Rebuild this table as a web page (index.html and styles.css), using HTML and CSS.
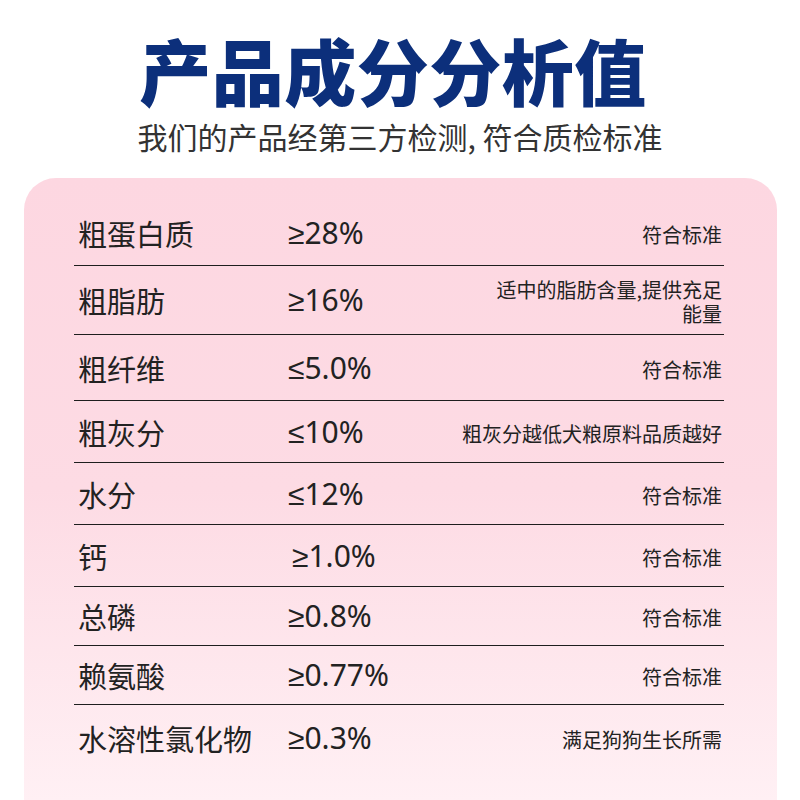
FILE: index.html
```html
<!DOCTYPE html>
<html lang="zh-CN">
<head>
<meta charset="utf-8">
<title>产品成分分析值</title>
<link rel="stylesheet" href="styles.css">
</head>
<body>
<header class="header">
  <h1 class="title">产品成分分析值</h1>
  <p class="subtitle">我们的产品经第三方检测, 符合质检标准</p>
</header>
<section class="card">
  <div class="row h66"><span class="name">粗蛋白质</span><span class="value">≥28%</span><span class="note">符合标准</span></div>
  <div class="row h69"><span class="name">粗脂肪</span><span class="value">≥16%</span><span class="note">适中的脂肪含量,提供充足<br>能量</span></div>
  <div class="row h66"><span class="name">粗纤维</span><span class="value">≤5.0%</span><span class="note">符合标准</span></div>
  <div class="row h62"><span class="name">粗灰分</span><span class="value">≤10%</span><span class="note">粗灰分越低犬粮原料品质越好</span></div>
  <div class="row h62"><span class="name">水分</span><span class="value">≤12%</span><span class="note">符合标准</span></div>
  <div class="row h62"><span class="name">钙</span><span class="value shift">≥1.0%</span><span class="note">符合标准</span></div>
  <div class="row h59"><span class="name">总磷</span><span class="value">≥0.8%</span><span class="note">符合标准</span></div>
  <div class="row h59"><span class="name">赖氨酸</span><span class="value">≥0.77%</span><span class="note">符合标准</span></div>
  <div class="row h66 last"><span class="name">水溶性氯化物</span><span class="value">≥0.3%</span><span class="note">满足狗狗生长所需</span></div>
</section>
</body>
</html>
```

FILE: styles.css
```css
html, body {
  margin: 0;
  padding: 0;
  background: #ffffff;
}
body {
  width: 800px;
  height: 800px;
  overflow: hidden;
  font-family: "Noto Sans CJK SC", "Noto Sans", sans-serif;
  color: #222;
}
.header {
  padding-top: 29px;
  text-align: center;
}
.title {
  margin: 0 0 0 -14px;
  font-size: 72px;
  line-height: 80px;
  font-weight: 900;
  color: #0c2f7b;
  letter-spacing: 0.5px;
}
.subtitle {
  margin: 9px 0 0 0;
  font-size: 30px;
  line-height: 36px;
  color: #333;
  font-weight: 400;
}
.card {
  margin: 24px 23px 0 24px;
  height: 622px;
  border-radius: 32px 32px 0 0;
  background: linear-gradient(180deg, #fdd7e1 0%, #fddbe4 50%, #fff0f4 100%);
  padding: 22px 53px 0 50px;
  box-sizing: border-box;
}
.row {
  display: grid;
  grid-template-columns: 210px auto 1fr;
  align-items: center;
  border-bottom: 1.5px solid #1e1e1e;
  box-sizing: border-box;
  padding: 0 2px 0 4px;
}
.row.last {
  border-bottom: none;
}
.h66 { height: 66px; }
.h69 { height: 69px; }
.h62 { height: 62px; }
.h59 { height: 59px; }
.name {
  font-size: 29px;
  line-height: 42px;
  color: #222;
}
.value {
  font-family: "Noto Sans", sans-serif;
  font-size: 30px;
  line-height: 42px;
  color: #222;
}
.value.shift {
  padding-left: 4px;
}
.note {
  justify-self: end;
  text-align: right;
  font-size: 20px;
  line-height: 24px;
  color: #222;
  padding-top: 4px;
}
```
